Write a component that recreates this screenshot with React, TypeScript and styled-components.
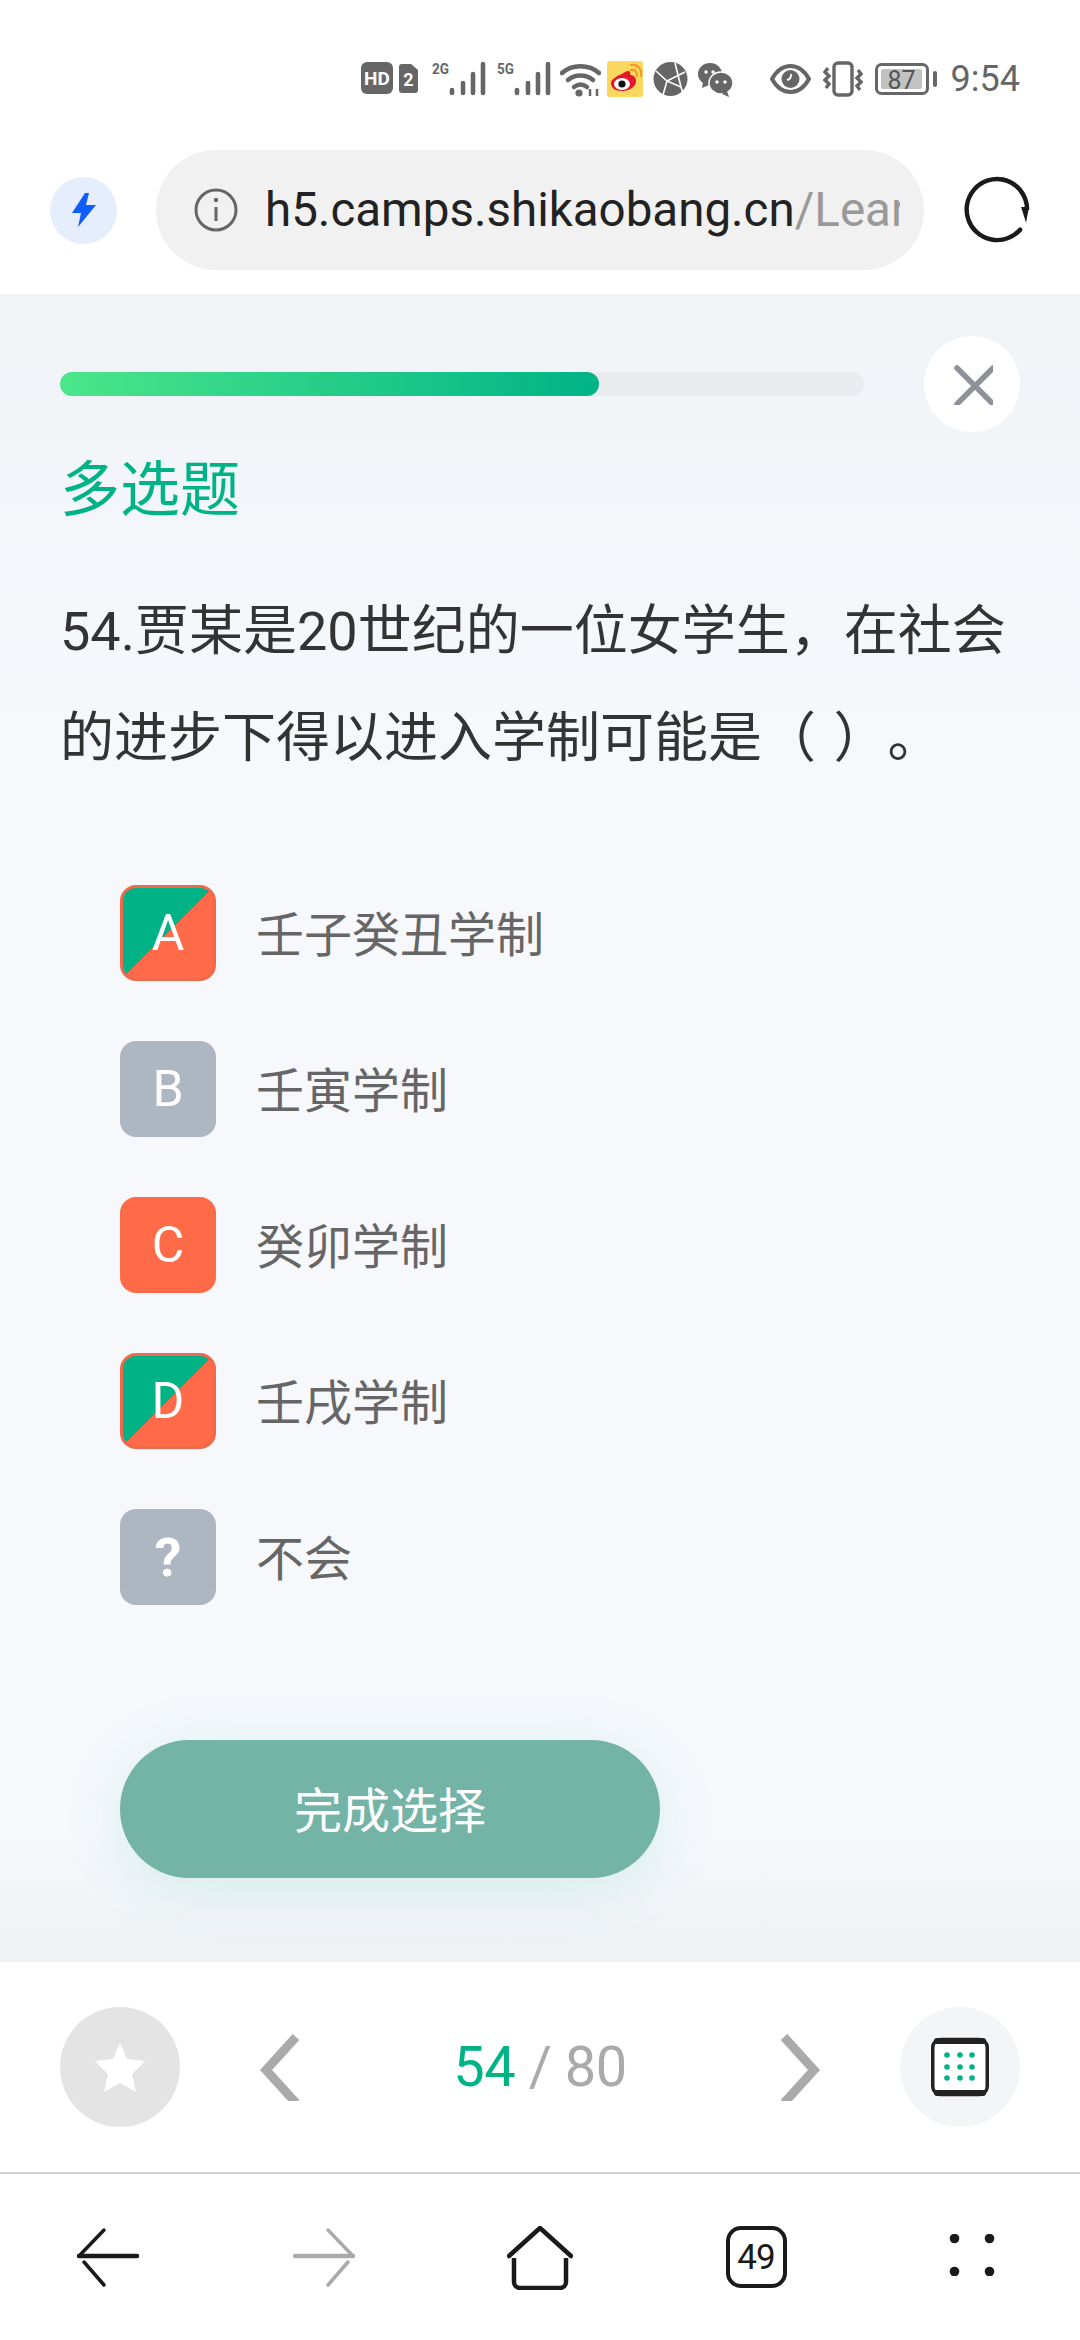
import { createGlobalStyle, styled } from "styled-components";

const GlobalStyle = createGlobalStyle`
  html, body {
    margin: 0;
    padding: 0;
    background: #fff;
  }
  body {
    font-family: "Roboto", "Noto Sans CJK SC", sans-serif;
    text-spacing-trim: space-all;
  }
`;

const Page = styled.div`
  width: 1080px;
  height: 2340px;
  display: flex;
  flex-direction: column;
  overflow: hidden;
`;

const StatusBar = styled.div`
  height: 150px;
  flex: none;
  box-sizing: border-box;
  padding: 61px 60px 0 0;
  display: flex;
  justify-content: flex-end;
  align-items: flex-start;
  background: #fff;
`;

const StatusIcon = styled.svg<{ $ml: number }>`
  flex: none;
  display: block;
  margin-left: ${(p) => p.$ml}px;
`;

const Clock = styled.span`
  margin-left: 13px;
  font-size: 36px;
  line-height: 36px;
  color: #666;
`;

const BrowserBar = styled.div`
  height: 144px;
  flex: none;
  box-sizing: border-box;
  padding: 0 50px 24px;
  display: flex;
  align-items: center;
  background: #fff;
`;

const BoltBadge = styled.div`
  width: 67px;
  height: 67px;
  flex: none;
  border-radius: 50%;
  background: #e6edfd;
  display: flex;
  align-items: center;
  justify-content: center;
`;

const UrlPill = styled.div`
  width: 768px;
  height: 120px;
  margin: 0 39px;
  flex: none;
  box-sizing: border-box;
  padding: 0 24px 0 38px;
  border-radius: 60px;
  background: #f1f1f1;
  display: flex;
  align-items: center;
  gap: 27px;
`;

const UrlText = styled.div`
  flex: 1;
  min-width: 0;
  overflow: hidden;
  white-space: nowrap;
  font-size: 47.5px;
  color: #222;
`;

const UrlRest = styled.span`
  color: #999;
`;

const Main = styled.main`
  height: 1668px;
  flex: none;
  box-sizing: border-box;
  padding: 42px 60px 0;
  background: linear-gradient(180deg, #f0f4f7 0, #f6f8fc 460px, #f6f8fc 1540px, #eef1f4 1668px);
`;

const ProgressRow = styled.div`
  display: flex;
  align-items: center;
  justify-content: space-between;
`;

const Track = styled.div`
  width: 804px;
  height: 24px;
  border-radius: 12px;
  background: #e8ecef;
`;

const Fill = styled.div`
  height: 100%;
  border-radius: 12px;
  background: linear-gradient(90deg, #4ae78a, #00b386);
`;

const CloseButton = styled.div`
  width: 96px;
  height: 96px;
  border-radius: 50%;
  background: #fff;
  display: flex;
  align-items: center;
  justify-content: center;
`;

const TypeLabel = styled.div`
  margin-top: 21px;
  font-size: 60px;
  line-height: 76px;
  color: #00b386;
`;

const Question = styled.p`
  margin: 49px 0 0;
  font-size: 54px;
  line-height: 107px;
  word-spacing: 4px;
  color: #333;
`;

const Options = styled.div`
  margin: 93px 0 0 60px;
  display: flex;
  flex-direction: column;
  gap: 60px;
`;

const Option = styled.div`
  display: flex;
  align-items: center;
  gap: 40px;
`;

type TileKind = "none" | "wrong" | "mixed";

const tileBackground: Record<TileKind, string> = {
  none: "#aeb6c1",
  wrong: "#ff6a48",
  mixed: "linear-gradient(135deg, #00b386 50%, #ff6a48 50%)",
};

const Tile = styled.div<{ $kind: TileKind }>`
  width: 96px;
  height: 96px;
  flex: none;
  box-sizing: border-box;
  border-radius: 16px;
  border: ${(p) => (p.$kind === "mixed" ? "3px solid #f0694b" : "0")};
  background: ${(p) => tileBackground[p.$kind]};
  background-origin: border-box;
  display: flex;
  align-items: center;
  justify-content: center;
  font-size: 50px;
  color: #fff;
`;

const QuestionMark = styled.span`
  font-weight: 700;
  font-size: 54px;
`;

const OptionText = styled.span`
  padding-bottom: 4px;
  font-size: 48px;
  color: #666;
`;

const SubmitButton = styled.div`
  width: 540px;
  height: 138px;
  margin: 135px 0 0 60px;
  box-sizing: border-box;
  padding-bottom: 4px;
  border-radius: 69px;
  background: #74b4a6;
  box-shadow: 0 10px 60px rgba(0, 179, 134, 0.13);
  display: flex;
  align-items: center;
  justify-content: center;
  font-size: 48px;
  color: #fff;
`;

const AnswerBar = styled.div`
  height: 212px;
  flex: none;
  box-sizing: border-box;
  padding: 0 60px;
  background: #fff;
  border-bottom: 2px solid #d0d0d0;
  display: flex;
  align-items: center;
  justify-content: space-between;
`;

const RoundButton = styled.div<{ $bg: string }>`
  width: 120px;
  height: 120px;
  flex: none;
  border-radius: 50%;
  background: ${(p) => p.$bg};
  display: flex;
  align-items: center;
  justify-content: center;
`;

const Pager = styled.div`
  flex: 1;
  padding: 0 80px;
  display: flex;
  align-items: center;
  justify-content: space-between;
`;

const Count = styled.div`
  font-size: 56px;
  letter-spacing: -0.5px;
  color: #aaa;
  white-space: pre;
`;

const Current = styled.span`
  color: #00b386;
`;

const NavBar = styled.nav`
  flex: 1;
  background: #fff;
  display: grid;
  grid-template-columns: repeat(5, 216px);
  align-items: start;
  justify-items: center;
  padding-top: 52px;
`;

const TabCount = styled.div`
  width: 61px;
  height: 62px;
  box-sizing: border-box;
  border: 4px solid #1a1a1a;
  border-radius: 15px;
  display: flex;
  align-items: center;
  justify-content: center;
  font-size: 35px;
  letter-spacing: -1px;
  color: #1a1a1a;
`;

function SimSignal({ label, ml }: { label: string; ml: number }) {
  return (
    <StatusIcon $ml={ml} width="54" height="36" viewBox="0 0 54 36">
      <text x="0" y="13" fontSize="15" fontWeight="700" fontFamily="Roboto" fill="#666" textLength="17" lengthAdjust="spacingAndGlyphs">
        {label}
      </text>
      <g stroke="#666" strokeWidth="4.6" strokeLinecap="round">
        <path d="M20 29v3M31 22v10M41 13v19M51 3v29" />
      </g>
    </StatusIcon>
  );
}

export default function App() {
  const current = 54;
  const total = 80;

  return (
    <Page>
      <GlobalStyle />
      <StatusBar>
        <StatusIcon $ml={0} width="32" height="34" viewBox="0 0 32 34">
          <rect y="1" width="32" height="32" rx="6" fill="#666" />
          <text x="16" y="24" textAnchor="middle" fontSize="19" fontWeight="700" fontFamily="Roboto" fill="#fff">
            HD
          </text>
        </StatusIcon>
        <StatusIcon $ml={6} width="19" height="34" viewBox="0 0 19 34">
          <path d="M3 3h9l7 6v20a3 3 0 0 1-3 3H3a3 3 0 0 1-3-3V6a3 3 0 0 1 3-3z" fill="#666" />
          <text x="9.5" y="25" textAnchor="middle" fontSize="18" fontWeight="700" fontFamily="Roboto" fill="#fff">
            2
          </text>
        </StatusIcon>
        <SimSignal label="2G" ml={14} />
        <SimSignal label="5G" ml={11} />
        <StatusIcon $ml={9} width="41" height="36" viewBox="0 0 41 36">
          <g fill="none" stroke="#666" strokeWidth="4.5" strokeLinecap="round">
            <path d="M2 12c10-9 27-9 37 0" />
            <path d="M8 19c7-6 18-6 25 0" />
            <path d="M14 26c4-3 9-3 13 0" />
          </g>
          <circle cx="19" cy="32" r="3.6" fill="#666" />
          <path d="M30 35v-7M37 28v7" stroke="#666" strokeWidth="2.5" />
        </StatusIcon>
        <StatusIcon $ml={6} width="36" height="36" viewBox="0 0 36 36">
          <rect width="36" height="36" rx="3" fill="#fbd75e" />
          <path
            d="M15 13c4-3 7-4 8-2 1 1 0 3 0 3 3 0 6 2 6 6 0 6-7 10-14 10S4 27 4 22c0-3 5-7 11-9z"
            fill="#e6162d"
          />
          <ellipse cx="15" cy="23" rx="8" ry="6" fill="#fff" />
          <circle cx="15" cy="23" r="3.6" fill="#111" />
          <g fill="none" stroke="#f39a2b" strokeWidth="2.2" strokeLinecap="round">
            <path d="M24 9c4-1 6 2 6 6" />
            <path d="M24 4c7-1 11 4 10 11" />
          </g>
        </StatusIcon>
        <StatusIcon $ml={10} width="35" height="36" viewBox="0 0 35 36">
          <circle cx="17.5" cy="18" r="17" fill="#666" />
          <g fill="none" stroke="#fff" strokeWidth="1.6">
            <path d="M3 10l11 10 18-9" />
            <path d="M14 20l-4 14M14 20l14 6 2 6M22 2l6 24" />
          </g>
        </StatusIcon>
        <StatusIcon $ml={10} width="35" height="36" viewBox="0 0 35 36">
          <ellipse cx="12" cy="13" rx="12" ry="11" fill="#666" />
          <path d="M5 21l-1 6 7-3z" fill="#666" />
          <ellipse cx="23" cy="22" rx="12" ry="11" fill="#666" stroke="#fff" strokeWidth="1.5" />
          <path d="M29 30l2 6-7-3z" fill="#666" />
          <circle cx="8" cy="11" r="1.7" fill="#fff" />
          <circle cx="15" cy="11" r="1.7" fill="#fff" />
          <circle cx="19" cy="21" r="1.7" fill="#fff" />
          <circle cx="27" cy="21" r="1.7" fill="#fff" />
        </StatusIcon>
        <StatusIcon $ml={37} width="41" height="36" viewBox="0 0 41 36">
          <path d="M2 18C7 9 13 5 20.5 5S34 9 39 18c-5 9-11 13-18.5 13S7 27 2 18z" fill="none" stroke="#666" strokeWidth="4" />
          <circle cx="20.5" cy="18" r="9" fill="#666" />
          <path d="M21 13a5 5 0 0 1-4 6" stroke="#fff" strokeWidth="2" fill="none" />
        </StatusIcon>
        <StatusIcon $ml={12} width="40" height="36" viewBox="0 0 40 36">
          <rect x="11" y="2" width="18" height="32" rx="4" fill="none" stroke="#666" strokeWidth="3.4" />
          <g fill="none" stroke="#666" strokeWidth="3.4">
            <path d="M5 7l-3 4 4 4-4 4 4 4-3 4" />
            <path d="M35 9l3 4-4 4 4 4-4 4 3 4" />
          </g>
        </StatusIcon>
        <StatusIcon $ml={12} width="63" height="36" viewBox="0 0 63 36">
          <rect x="1.5" y="3.5" width="51" height="29" rx="5" fill="none" stroke="#666" strokeWidth="3" />
          <rect x="6" y="8" width="41" height="20" rx="2" fill="#c2c2c2" />
          <rect x="58" y="10" width="4" height="16" rx="2" fill="#666" />
          <text x="26.5" y="28" textAnchor="middle" fontSize="25" fontFamily="Roboto" fill="#555">
            87
          </text>
        </StatusIcon>
        <Clock>9:54</Clock>
      </StatusBar>

      <BrowserBar>
        <BoltBadge>
          <svg width="26" height="34" viewBox="0 0 26 34">
            <path d="M14 0L1 20h9l-3 14L25 12h-10l3-12z" fill="#0f5cff" />
          </svg>
        </BoltBadge>
        <UrlPill>
          <svg width="44" height="44" viewBox="0 0 44 44" style={{ flex: "none" }}>
            <circle cx="22" cy="22" r="20" fill="none" stroke="#666" strokeWidth="3" />
            <path d="M22 19v14" stroke="#666" strokeWidth="3" />
            <circle cx="22" cy="12" r="2.2" fill="#666" />
          </svg>
          <UrlText>
            h5.camps.shikaobang.cn<UrlRest>/LearnCenter</UrlRest>
          </UrlText>
        </UrlPill>
        <svg width="68" height="68" viewBox="0 0 68 68">
          <path d="M40 3A31 31 0 1 0 58 54" fill="none" stroke="#1a1a1a" strokeWidth="4.5" strokeLinecap="round" />
          <path d="M40 3A31 31 0 0 1 65 34" fill="none" stroke="#1a1a1a" strokeWidth="4.5" />
          <path d="M59 31h8l-3 16z" fill="#1a1a1a" />
        </svg>
      </BrowserBar>

      <Main>
        <ProgressRow>
          <Track>
            <Fill style={{ width: `${Math.floor((current / total) * 100)}%` }} />
          </Track>
          <CloseButton>
            <svg width="42" height="42" viewBox="-3 -2 42 42">
              <path d="M3 3l36 36M39 3L3 39" stroke="#8c9297" strokeWidth="5.5" strokeLinecap="round" />
            </svg>
          </CloseButton>
        </ProgressRow>
        <TypeLabel>多选题</TypeLabel>
        <Question>54.贾某是20世纪的一位女学生，在社会的进步下得以进入学制可能是（ ）。</Question>
        <Options>
          <Option>
            <Tile $kind="mixed">A</Tile>
            <OptionText>壬子癸丑学制</OptionText>
          </Option>
          <Option>
            <Tile $kind="none">B</Tile>
            <OptionText>壬寅学制</OptionText>
          </Option>
          <Option>
            <Tile $kind="wrong">C</Tile>
            <OptionText>癸卯学制</OptionText>
          </Option>
          <Option>
            <Tile $kind="mixed">D</Tile>
            <OptionText>壬戌学制</OptionText>
          </Option>
          <Option>
            <Tile $kind="none">
              <QuestionMark>?</QuestionMark>
            </Tile>
            <OptionText>不会</OptionText>
          </Option>
        </Options>
        <SubmitButton>完成选择</SubmitButton>
      </Main>

      <AnswerBar>
        <RoundButton $bg="#e4e4e4">
          <svg width="52" height="50" viewBox="0 0 52 50">
            <path d="M26 1l7 16 18 2-13 13 4 18-16-9-16 9 4-18L1 19l18-2z" fill="#fff" />
          </svg>
        </RoundButton>
        <Pager>
          <svg width="40" height="68" viewBox="0 -3 40 68">
            <path d="M36 1L6 34l30 33" fill="none" stroke="#aaa" strokeWidth="9" />
          </svg>
          <Count>
            <Current>{current}</Current> / {total}
          </Count>
          <svg width="40" height="68" viewBox="0 -3 40 68">
            <path d="M4 1l30 33L4 67" fill="none" stroke="#aaa" strokeWidth="9" />
          </svg>
        </Pager>
        <RoundButton $bg="#f4f5f7">
          <svg width="58" height="60" viewBox="0 0 58 60">
            <rect x="1.75" y="2.5" width="54.5" height="55" rx="8" fill="#fff" stroke="#222" strokeWidth="3.5" />
            <path d="M6 4h46M6 56h46" stroke="#222" strokeWidth="6" strokeLinecap="round" />
            <g fill="#00b386">
              <circle cx="16" cy="18" r="2.8" />
              <circle cx="29" cy="18" r="2.8" />
              <circle cx="41" cy="18" r="2.8" />
              <circle cx="16" cy="30" r="2.8" />
              <circle cx="29" cy="30" r="2.8" />
              <circle cx="41" cy="30" r="2.8" />
              <circle cx="16" cy="41" r="2.8" />
              <circle cx="29" cy="41" r="2.8" />
              <circle cx="41" cy="41" r="2.8" />
            </g>
          </svg>
        </RoundButton>
      </AnswerBar>

      <NavBar>
        <svg width="64" height="62" viewBox="0 0 64 62">
          <path d="M3 30h58" stroke="#1a1a1a" strokeWidth="4.5" strokeLinecap="round" />
          <path d="M28 4L3 30M8 36l20 23" stroke="#1a1a1a" strokeWidth="3.5" strokeLinecap="round" fill="none" />
        </svg>
        <svg width="64" height="62" viewBox="0 0 64 62">
          <path d="M3 30h58" stroke="#aaa" strokeWidth="4.5" strokeLinecap="round" />
          <path d="M36 4l25 26M56 36L36 59" stroke="#aaa" strokeWidth="3.5" strokeLinecap="round" fill="none" />
        </svg>
        <svg width="66" height="64" viewBox="0 0 66 64">
          <path d="M2 30L33 2l31 28" fill="none" stroke="#1a1a1a" strokeWidth="4.5" strokeLinecap="round" strokeLinejoin="round" />
          <path d="M7 32v24a6 6 0 0 0 6 6h40a6 6 0 0 0 6-6V32" fill="none" stroke="#1a1a1a" strokeWidth="4.5" />
        </svg>
        <TabCount>49</TabCount>
        <svg width="48" height="42" viewBox="0 0 48 42" style={{ marginTop: 8 }}>
          <g fill="#1a1a1a">
            <circle cx="6.5" cy="4.5" r="4.8" />
            <circle cx="41.5" cy="4.5" r="4.8" />
            <circle cx="6.5" cy="37.5" r="4.8" />
            <circle cx="41.5" cy="37.5" r="4.8" />
          </g>
        </svg>
      </NavBar>
    </Page>
  );
}
